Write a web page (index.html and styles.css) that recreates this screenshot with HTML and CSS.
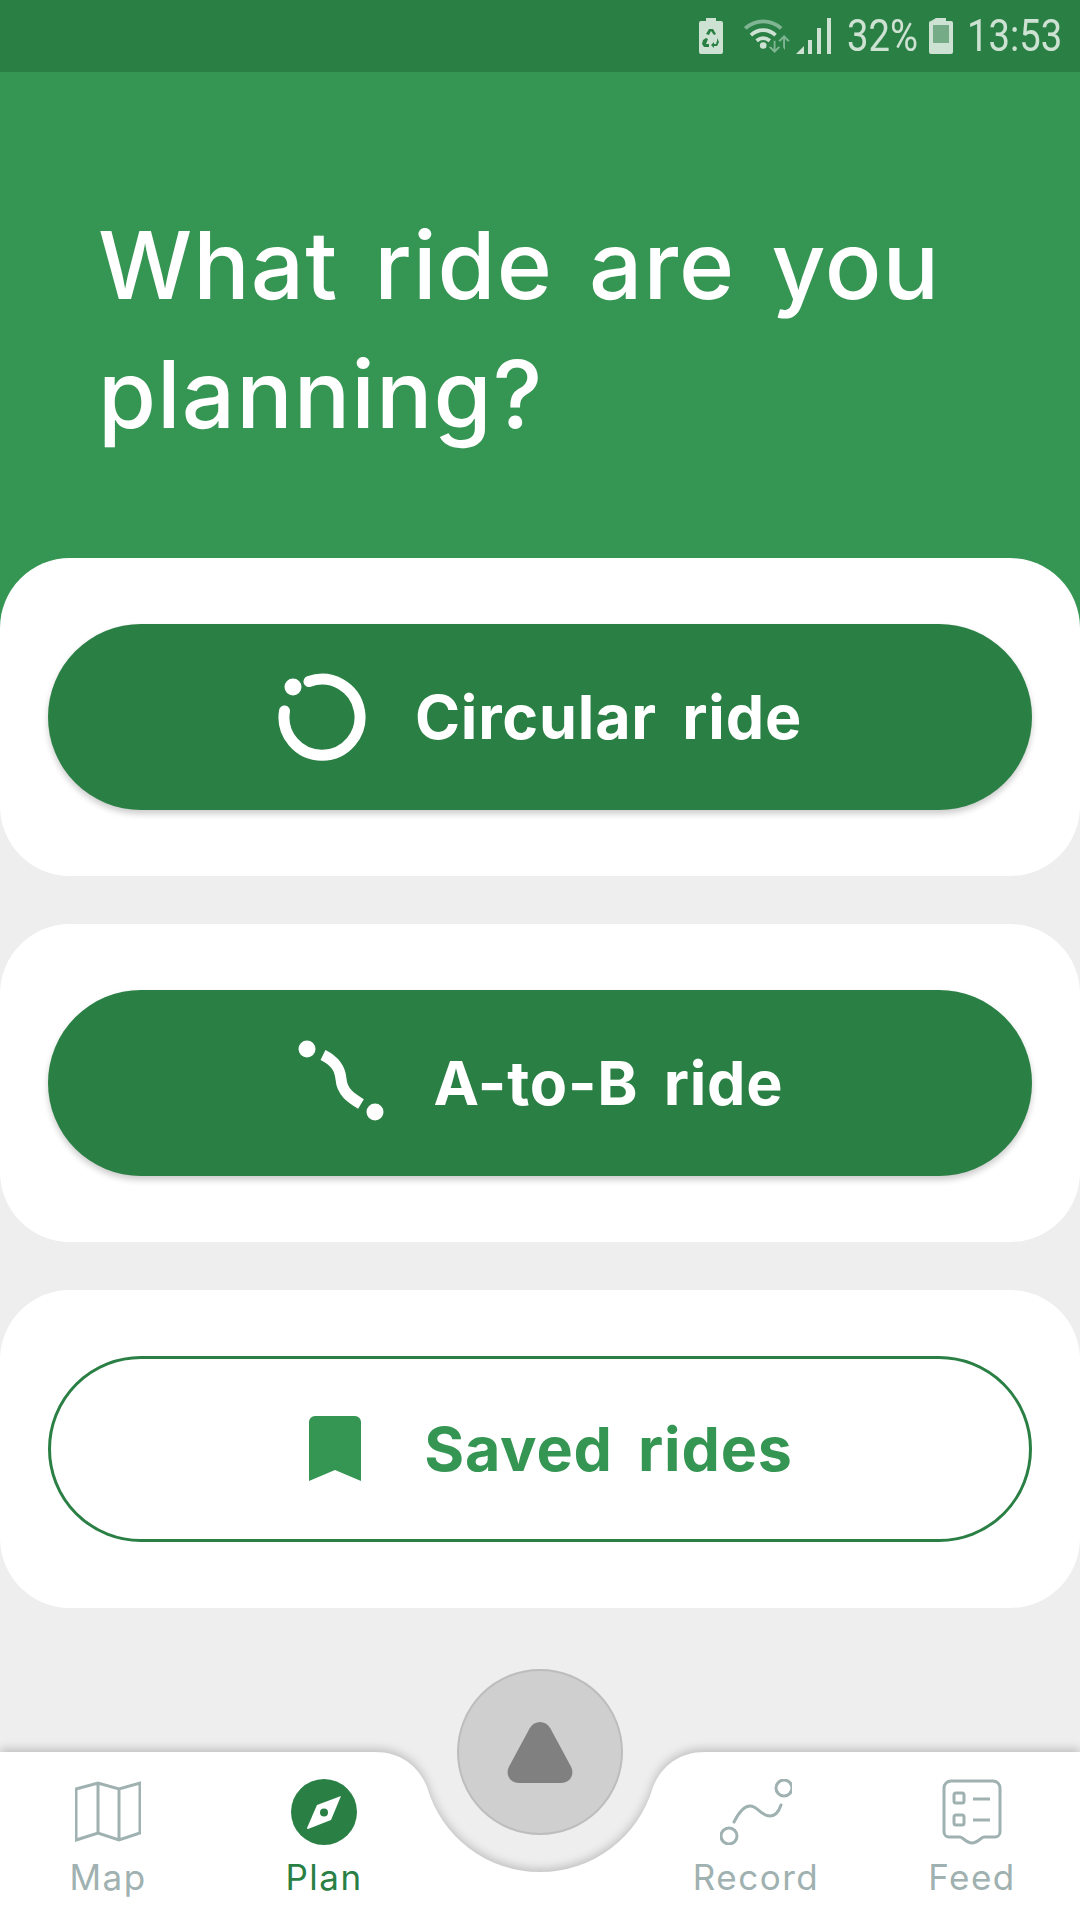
FILE: index.html
```html
<!DOCTYPE html>
<html>
<head>
    <meta charset="UTF-8">
    <title>Plan</title>
    <link rel="stylesheet" href="styles.css">
</head>
<body>
<div class="status-bar">
    <svg class="st-battery-saver" viewBox="0 0 24 36">
        <path d="M7 0h10v3h5a2 2 0 0 1 2 2v29a2 2 0 0 1-2 2H2a2 2 0 0 1-2-2V5a2 2 0 0 1 2-2h5z" fill="#cde2d3"/>
        <path d="M10 11h4l3 5-2 1-3-4-2 4-3-1zM18 20l2 4-2 4h-3v2l-3-3 3-3v2h2l1-3zM4 22l3-2 2 1-2 5h3v3H5l-2-3z" fill="#2a7f44"/>
    </svg>
    <svg class="st-wifi" viewBox="0 0 50 38">
        <path d="M2 11C13 1 29 1 40 11" fill="none" stroke="#7fb592" stroke-width="4"/>
        <path d="M8 18c8-7 18-7 26 0M14 24c5-4 9-4 14 0" fill="none" stroke="#cde2d3" stroke-width="4"/>
        <circle cx="21" cy="29" r="3.500" fill="#cde2d3"/>
        <path d="M32 24v9l-3-3-2 1 6 6 6-6-2-1-3 3v-9zM44 34V22l3 3 2-1-6-6-6 6 2 1 3-3v9z" fill="#7fb592"/>
    </svg>
    <svg class="st-signal" viewBox="0 0 35 36">
        <path d="M0 36l8-8v8zM12 22h4v14h-4zM21 10h4v26h-4zM31 0h4v36h-4z" fill="#cde2d3"/>
    </svg>
    <span class="st-text st-percent">32%</span>
    <svg class="st-battery" viewBox="0 0 24 36">
        <path d="M7 0h10v3h5a2 2 0 0 1 2 2v29a2 2 0 0 1-2 2H2a2 2 0 0 1-2-2V5a2 2 0 0 1 2-2z" fill="#cde2d3"/>
        <path d="M4 7h16v18H4z" fill="#76ab88"/>
    </svg>
    <span class="st-text st-clock">13:53</span>
</div>

<header class="page-head">
    <h1>What ride are you planning?</h1>
</header>

<main class="ride-list">
    <section class="ride-card">
        <a class="ride-btn">
            <svg class="ride-icon" viewBox="0 0 88 88">
                <path d="M31 8.500A38 38 0 1 1 6.500 38" fill="none" stroke="#fff" stroke-width="11" stroke-linecap="round"/>
                <circle cx="15" cy="14" r="8.500" fill="#fff"/>
            </svg>
            <span>Circular ride</span>
        </a>
    </section>
    <section class="ride-card">
        <a class="ride-btn">
            <svg class="ride-icon" viewBox="0 0 88 88">
                <circle cx="10" cy="10" r="8.500" fill="#fff"/>
                <circle cx="78" cy="73" r="8.500" fill="#fff"/>
                <path d="M26 16c12 6 17 13 18 24 1 13 10 19 20 25" fill="none" stroke="#fff" stroke-width="11"/>
            </svg>
            <span>A-to-B ride</span>
        </a>
    </section>
    <section class="ride-card">
        <a class="ride-btn ride-btn-outline">
            <svg class="ride-icon" viewBox="0 0 88 88">
                <path d="M22 17a6 6 0 0 1 6-6h40a6 6 0 0 1 6 6v59l-26-11-26 11z" fill="#359553"/>
            </svg>
            <span>Saved rides</span>
        </a>
    </section>
</main>

<nav class="tab-bar">
    <svg class="tab-bg" viewBox="0 0 1080 168">
        <path d="M0 0H375C400 0 418 13 427 35A117.600 117.600 0 0 0 653 35C662 13 680 0 705 0H1080V168H0Z" fill="#fff"/>
    </svg>
    <a class="tab">
        <svg class="tab-icon" viewBox="0 0 66 66">
            <path d="M1 10l22-6 21 6 21-6v50l-21 7-21-7-22 7zM23 4v50M44 10v51" fill="none" stroke="#9fb1b0" stroke-width="3"/>
        </svg>
        <span>Map</span>
    </a>
    <a class="tab tab-active">
        <svg class="tab-icon" viewBox="0 0 66 66">
            <circle cx="33" cy="33" r="33" fill="#2a7f44"/>
            <path d="M50 17L40 41 17 50c-1 0-1-1-1-1L26 26z" fill="#fff"/>
            <circle cx="33" cy="33.500" r="4" fill="#2a7f44"/>
        </svg>
        <span>Plan</span>
    </a>
    <div class="tab-gap"></div>
    <a class="tab">
        <svg class="tab-icon tab-icon-wide" viewBox="0 0 72 66">
            <circle cx="64" cy="9" r="8" fill="none" stroke="#9fb1b0" stroke-width="3"/>
            <circle cx="9" cy="57" r="8" fill="none" stroke="#9fb1b0" stroke-width="3"/>
            <path d="M14 43c4-8 10-16 16-16 8 0 11 10 20 10 6 0 9-5 11-11" fill="none" stroke="#9fb1b0" stroke-width="3" stroke-linecap="round"/>
        </svg>
        <span>Record</span>
    </a>
    <a class="tab">
        <svg class="tab-icon" viewBox="0 0 60 66">
            <path d="M9 2h42a7 7 0 0 1 7 7v44a5 5 0 0 1-5 5H42c-3 0-6 6-12 6s-9-6-12-6H7a5 5 0 0 1-5-5V9a7 7 0 0 1 7-7z" fill="none" stroke="#9fb1b0" stroke-width="3"/>
            <rect x="12" y="14" width="10" height="10" rx="2" fill="none" stroke="#9fb1b0" stroke-width="3"/>
            <rect x="12" y="36" width="10" height="10" rx="2" fill="none" stroke="#9fb1b0" stroke-width="3"/>
            <path d="M31 20h17M31 41h17" stroke="#9fb1b0" stroke-width="3"/>
        </svg>
        <span>Feed</span>
    </a>
    <div class="fab">
        <svg viewBox="0 0 64 60"><path d="M22 6c5-8 15-8 20 0l20 37c4 8-1 16-9 16H11c-8 0-13-8-9-16z" fill="#808080"/></svg>
    </div>
</nav>
</body>
</html>
```

FILE: styles.css
```css
/* page frame */
body {
    margin: 0;
    height: 1920px;
    display: flex;
    flex-direction: column;
    overflow: hidden;
    background-color: #eeeeee;
    font-family: Inter, "Noto Sans", sans-serif;
}

/* status bar */
.status-bar {
    height: 72px;
    flex: none;
    display: flex;
    align-items: center;
    padding-left: 699px;
    background-color: #2a7f44;
}
.status-bar svg {
    flex: none;
    height: 36px;
}
.st-battery-saver { width: 24px; margin-right: 19px; }
.st-wifi { width: 50px; margin-right: 4px; }
.st-signal { width: 35px; margin-right: 16px; }
.st-battery { width: 24px; margin-right: 14px; }
.st-text {
    font-family: Roboto, sans-serif;
    font-weight: 400;
    font-size: 45px;
    line-height: 72px;
    color: #cde2d3;
    transform-origin: left center;
    transform: scaleX(0.85);
    white-space: nowrap;
}
.st-percent { width: 82px; }
.st-clock { width: 96px; }

/* green heading */
.page-head {
    height: 556px;
    margin-bottom: -70px;
    flex: none;
    box-sizing: border-box;
    padding: 129px 140px 0 98px;
    background-color: #359553;
}
.page-head h1 {
    margin: 0;
    font-size: 94px;
    font-weight: 500;
    letter-spacing: 1px;
    line-height: 129px;
    color: white;
    text-align: justify;
}

/* ride cards */
.ride-list {
    display: flex;
    flex-direction: column;
    gap: 48px;
}
.ride-card {
    padding: 66px 48px;
    border-radius: 70px;
    background-color: white;
}
.ride-btn {
    height: 186px;
    box-sizing: border-box;
    display: flex;
    align-items: center;
    justify-content: center;
    gap: 49px;
    border-radius: 93px;
    background-color: #2a7f44;
    box-shadow: 0 4px 6px rgba(0, 0, 0, 0.2);
    color: white;
    font-size: 61px;
    font-weight: 700;
    letter-spacing: 0.8px;
    word-spacing: 10px;
}
.ride-btn-outline {
    background-color: white;
    border: 3px solid #2a7f44;
    box-shadow: none;
    color: #359553;
}
.ride-icon {
    width: 88px;
    height: 88px;
    flex: none;
}

/* bottom tabs */
.tab-bar {
    position: relative;
    height: 168px;
    margin-top: auto;
    flex: none;
    display: grid;
    grid-template-columns: repeat(5, 216px);
}
.tab-bg {
    position: absolute;
    left: 0;
    top: 0;
    width: 1080px;
    height: 168px;
    filter: drop-shadow(0 -3px 5px rgba(0, 0, 0, 0.2));
}
.tab {
    position: relative;
    display: flex;
    flex-direction: column;
    align-items: center;
    padding-top: 27px;
    font-size: 35px;
    letter-spacing: 1.5px;
    line-height: 64px;
    color: #9fb1b0;
}
.tab-active {
    color: #2a7f44;
}
.tab-icon {
    height: 66px;
    width: 66px;
}
.tab-icon-wide {
    width: 72px;
}
.fab {
    position: absolute;
    left: 457px;
    top: -83px;
    width: 166px;
    height: 166px;
    box-sizing: border-box;
    display: flex;
    align-items: center;
    justify-content: center;
    border: 2px solid #bdbdbd;
    border-radius: 50%;
    background-color: #cfcfcf;
}
.fab svg {
    width: 66px;
    height: 62px;
    margin-top: 2px;
}
```
